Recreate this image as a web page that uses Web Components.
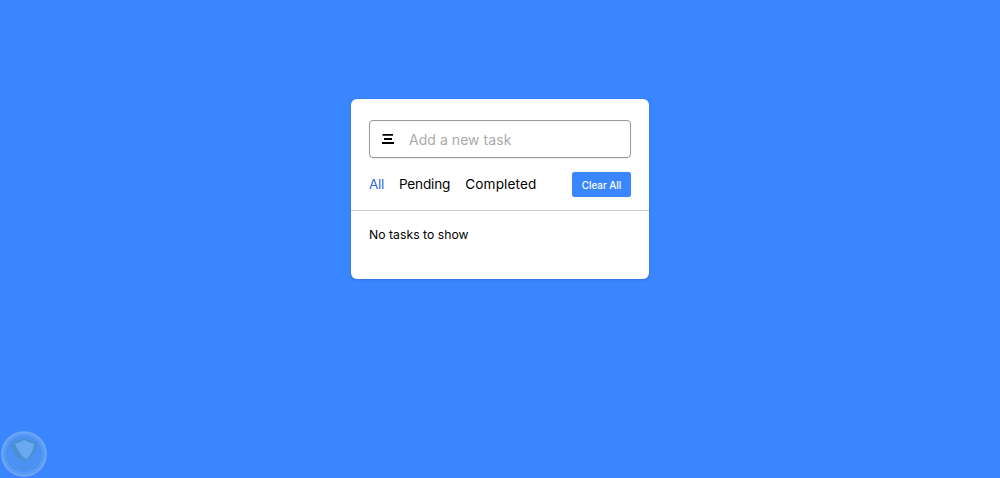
<!DOCTYPE html>
<html><head><meta charset="utf-8"><style>
html,body{margin:0;height:100%}
body{background:#3a86ff;font-family:Inter,"Liberation Sans",sans-serif;overflow:hidden;position:relative}
</style></head><body>
<todo-app></todo-app>
<corner-badge></corner-badge>
<script>
class TodoInput extends HTMLElement{constructor(){super();this.attachShadow({mode:'open'}).innerHTML=`<style>
:host{display:flex;align-items:center;box-sizing:border-box;height:38px;border:1px solid #999;border-radius:4px;padding-left:12px;gap:15px;box-shadow:0 1px 1px rgba(0,0,0,.08)}
svg{display:block;flex:none}
span{font-size:14px;letter-spacing:.05px;color:#aaa}
</style><svg width="12" height="10" viewBox="0 0 12 10"><path d="M.5 .9h10.500M2 5h8M0 9h12" stroke="#000" stroke-width="1.800" fill="none"/></svg><span><slot></slot></span>`}}
customElements.define('todo-input',TodoInput);
class FilterTab extends HTMLElement{constructor(){super();this.attachShadow({mode:'open'}).innerHTML=`<style>
:host{display:block;font-size:13.6px;letter-spacing:-.18px;line-height:16px;margin-top:-2px;color:#000}
:host([active]){color:#2f6bdc;letter-spacing:-.35px}
:host([wide]){letter-spacing:.14px}
</style><slot></slot>`}}
customElements.define('filter-tab',FilterTab);
class ClearButton extends HTMLElement{constructor(){super();this.attachShadow({mode:'open'}).innerHTML=`<style>
:host{display:flex;align-items:center;justify-content:center;box-sizing:border-box;width:59px;height:25px;background:#3a86ff;border-radius:3px;color:#fff;font-size:9.9px;font-weight:500;box-shadow:0 0 1px rgba(0,0,0,.3)}
</style><slot></slot>`}}
customElements.define('clear-button',ClearButton);
class TodoApp extends HTMLElement{constructor(){super();this.attachShadow({mode:'open'}).innerHTML=`<style>
:host{display:block;position:absolute;left:351px;top:99px;width:298px;height:180px;box-sizing:border-box;background:#fff;border-radius:6px;box-shadow:0 1px 3px rgba(0,0,0,.15);color:#000}
.top{padding:21px 18px 0}
.row{display:flex;align-items:center;margin-top:14px;height:25px}
.tabs{display:flex;gap:15px}
clear-button{margin-left:auto}
hr{border:0;border-top:1px solid #ccc;margin:13px 0 0}
p{margin:16px 18px 0;font-size:12.2px;letter-spacing:.03px;line-height:16px}
</style><div class="top"><todo-input>Add a new task</todo-input>
<div class="row"><div class="tabs"><filter-tab active>All</filter-tab><filter-tab>Pending</filter-tab><filter-tab wide>Completed</filter-tab></div><clear-button>Clear All</clear-button></div></div>
<hr><p>No tasks to show</p>`}}
customElements.define('todo-app',TodoApp);
class CornerBadge extends HTMLElement{constructor(){super();this.attachShadow({mode:'open'}).innerHTML=`<style>
:host{display:block;position:absolute;left:1px;top:431px;width:46px;height:46px}
svg{display:block}
</style><svg width="46" height="46" viewBox="0 0 46 46"><circle cx="23" cy="23" r="22" fill="#5b9bf5" stroke="#76abf3" stroke-width="1.500"/><circle cx="23" cy="23" r="18.500" fill="#4c92f5"/><path d="M23 6.500C19 9.500 14 10.500 9.500 10.500 10 19 13 26 23 31c10-5 13-12 13.500-20.500C32 10.500 27 9.500 23 6.500z" fill="#4a90d2"/><path d="M14 12.500c4-.5 7-2 9-3.500 3 1.500 7 3 10 3.500-.5 6-3 12-8 16-5-4-9-10-11-16z" fill="#6aa8f0"/><path d="M12 37h2M17 37h11M31 37h3" stroke="#4a8ed0" stroke-width="1.200"/></svg>`}}
customElements.define('corner-badge',CornerBadge);
</script></body></html>
